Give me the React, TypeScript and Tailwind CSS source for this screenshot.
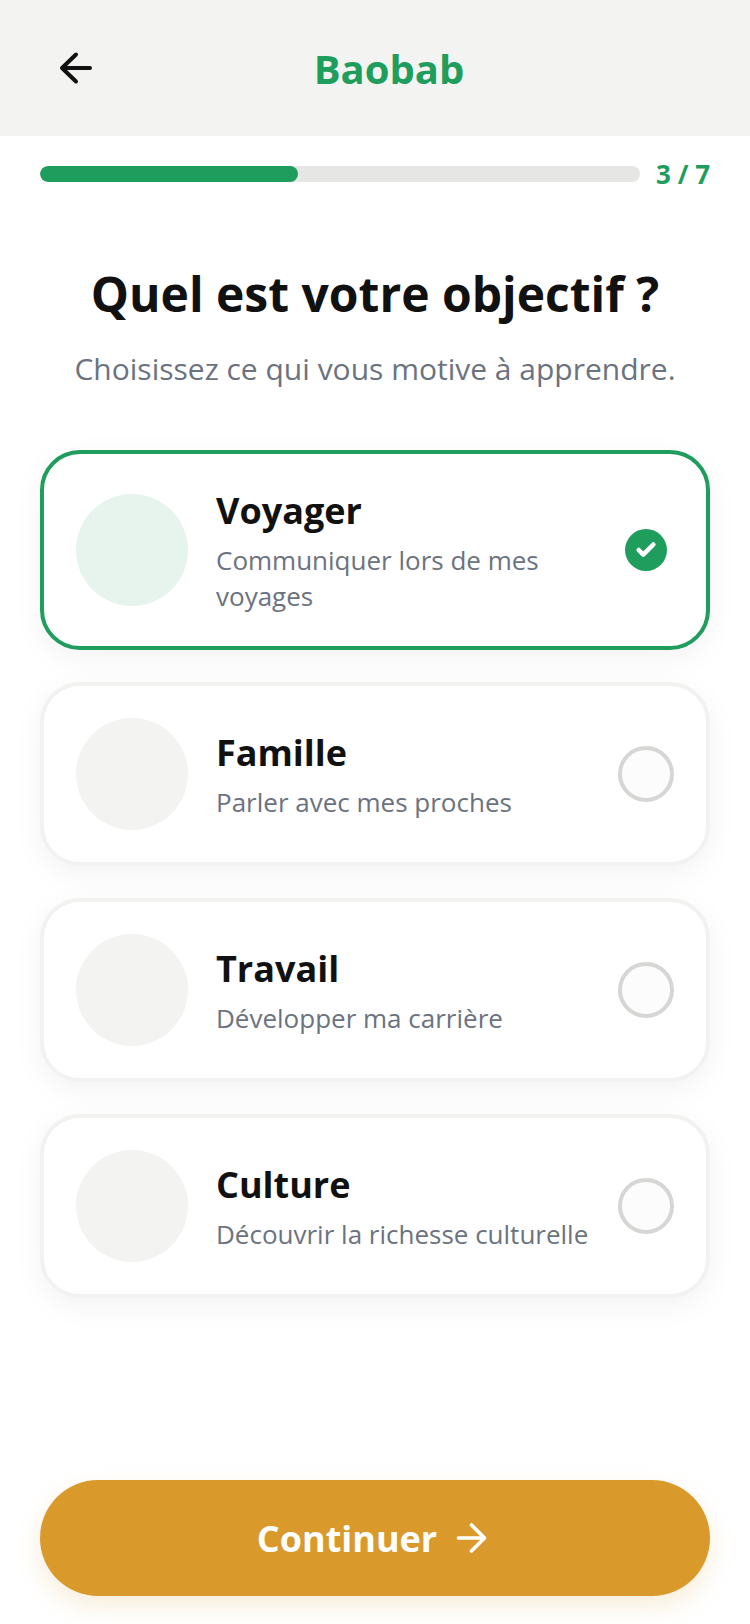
import React from 'react';
import { Check } from 'lucide-react';

const goals = [
  { title: 'Voyager', text: 'Communiquer lors de mes voyages', selected: true },
  { title: 'Famille', text: 'Parler avec mes proches', selected: false },
  { title: 'Travail', text: 'Développer ma carrière', selected: false },
  { title: 'Culture', text: 'Découvrir la richesse culturelle', selected: false },
];

const GoalCard: React.FC<(typeof goals)[number]> = ({ title, text, selected }) => {
  return (
    <div
      className={`flex items-center rounded-[40px] bg-white border-[4px] px-[32px] py-[32px] shadow-[0_8px_30px_rgba(0,0,0,0.05)] ${
        selected ? 'border-[#1f9d5c]' : 'border-[#f2f2f0]'
      }`}
    >
      <div className={`w-[112px] h-[112px] rounded-full shrink-0 ${selected ? 'bg-[#e6f4ed]' : 'bg-[#f3f3f1]'}`}></div>
      <div className="flex-1 ml-[28px] mr-[24px] min-w-0">
        <div className="text-[36px] leading-[50px] font-bold text-[#111111]">{title}</div>
        <div className="text-[26px] leading-[36px] mt-[6px] text-[#6b7280]">{text}</div>
      </div>
      <div className="w-[56px] h-[56px] flex items-center justify-center shrink-0">
        {selected ? (
          <div className="w-[42px] h-[42px] rounded-full bg-[#1f9d5c] flex items-center justify-center">
            <Check size={22} strokeWidth={5} className="text-white" />
          </div>
        ) : (
          <div className="w-[56px] h-[56px] rounded-full border-[4px] border-[#d6d6d4] bg-[#fcfcfc]"></div>
        )}
      </div>
    </div>
  );
};

export default function App() {
  return (
    <div className="w-[750px] h-[1624px] bg-white flex flex-col overflow-hidden font-['Open_Sans',sans-serif]">
      <div className="h-[136px] bg-[#f3f3f1] relative flex items-center justify-center pl-[28px] shrink-0">
        <svg width="44" height="44" viewBox="0 0 44 44" fill="none" stroke="#111111" strokeWidth="4" strokeLinecap="round" strokeLinejoin="round" className="absolute left-[54px] top-[46px]">
          <path d="M36 22H8M22 8.5 8 22l14 13.5" />
        </svg>
        <span className="text-[40px] font-bold text-[#1f9d5c] leading-none pt-[2px]">Baobab</span>
      </div>

      <div className="flex items-center px-[40px] mt-[30px] gap-[16px]">
        <div className="flex-1 h-[16px] rounded-full bg-[#e6e6e4] overflow-hidden">
          <div className="h-full w-[43%] rounded-full bg-[#1f9d5c]"></div>
        </div>
        <span className="text-[26px] leading-[16px] font-bold text-[#1f9d5c]">3 / 7</span>
      </div>

      <h1 className="mt-[80px] text-center text-[48px] leading-[64px] font-bold text-[#111111]">Quel est votre objectif ?</h1>
      <p className="mt-[21px] text-center text-[30px] leading-[44px] text-[#6b7280]">Choisissez ce qui vous motive à apprendre.</p>

      <div className="mt-[59px] px-[40px] flex flex-col gap-[32px]">
        {goals.map((g) => (
          <GoalCard key={g.title} {...g} />
        ))}
      </div>

      <div className="mt-auto px-[40px] pb-[28px]">
        <div className="h-[116px] rounded-full bg-[#d99a2b] flex items-center justify-center gap-[16px] shadow-[0_10px_24px_rgba(217,154,43,0.18)]">
          <span className="text-[36px] font-bold text-white leading-none pt-[2px]">Continuer</span>
          <svg width="40" height="40" viewBox="0 0 40 40" fill="none" stroke="#ffffff" strokeWidth="3.6" strokeLinecap="round" strokeLinejoin="round">
            <path d="M5.5 20h26M18.5 7l13 13-13 13" />
          </svg>
        </div>
      </div>
    </div>
  );
}
